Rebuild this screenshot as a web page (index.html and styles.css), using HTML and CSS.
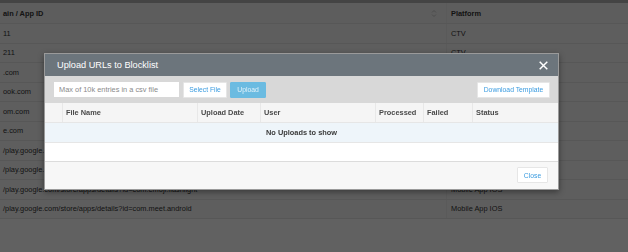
FILE: index.html
```html
<!DOCTYPE html>
<html lang="en">
<head>
  <meta charset="UTF-8">
  <meta name="viewport" content="width=device-width, initial-scale=1.0">
  <title>Blocklist</title>
  <link rel="stylesheet" href="styles.css">
</head>
<body>
  <div class="topbar"></div>
  <div class="list">
    <div class="list-row list-head">
      <div class="cell cell-main">
        <span>ain / App ID</span>
        <svg class="sort" width="6" height="9" viewBox="0 0 6 9">
          <path d="M1 3.5 L3 1.5 L5 3.5 M1 5.5 L3 7.5 L5 5.5" fill="none" stroke="#c8c8c8" stroke-width="1"/>
        </svg>
      </div>
      <div class="cell cell-platform">Platform</div>
    </div>
    <div class="list-row"><div class="cell cell-main">11</div><div class="cell cell-platform">CTV</div></div>
    <div class="list-row"><div class="cell cell-main">211</div><div class="cell cell-platform">CTV</div></div>
    <div class="list-row"><div class="cell cell-main">.com</div><div class="cell cell-platform">Web</div></div>
    <div class="list-row"><div class="cell cell-main">ook.com</div><div class="cell cell-platform">Web</div></div>
    <div class="list-row"><div class="cell cell-main">om.com</div><div class="cell cell-platform">Web</div></div>
    <div class="list-row"><div class="cell cell-main">e.com</div><div class="cell cell-platform">Web</div></div>
    <div class="list-row"><div class="cell cell-main">/play.google.com/store/apps/details?id=com.calc.android</div><div class="cell cell-platform">Mobile App IOS</div></div>
    <div class="list-row"><div class="cell cell-main">/play.google.com/store/apps/details?id=com.notes.app</div><div class="cell cell-platform">Mobile App IOS</div></div>
    <div class="list-row"><div class="cell cell-main">/play.google.com/store/apps/details?id=com.emoji.flashlight</div><div class="cell cell-platform">Mobile App IOS</div></div>
    <div class="list-row"><div class="cell cell-main">/play.google.com/store/apps/details?id=com.meet.android</div><div class="cell cell-platform">Mobile App IOS</div></div>
  </div>

  <div class="backdrop"></div>

  <div class="modal">
    <div class="modal-header">
      <span class="modal-title">Upload URLs to Blocklist</span>
      <svg class="modal-close" width="9" height="9" viewBox="0 0 9 9">
        <path d="M0.7 0.7 L8.3 8.3 M8.3 0.7 L0.7 8.3" stroke="#fff" stroke-width="1.5"/>
      </svg>
    </div>
    <div class="toolbar">
      <input class="file-input" type="text" placeholder="Max of 10k entries in a csv file">
      <button class="btn btn-select">Select File</button>
      <button class="btn btn-upload">Upload</button>
      <button class="btn btn-template">Download Template</button>
    </div>
    <div class="uploads">
      <div class="uploads-head">
        <div class="col"></div>
        <div class="col">File Name</div>
        <div class="col">Upload Date</div>
        <div class="col">User</div>
        <div class="col">Processed</div>
        <div class="col">Failed</div>
        <div class="col">Status</div>
      </div>
      <div class="uploads-empty">No Uploads to show</div>
      <div class="uploads-space"></div>
    </div>
    <div class="modal-footer">
      <button class="btn btn-close">Close</button>
    </div>
  </div>
</body>
</html>
```

FILE: styles.css
```css
body {
  margin: 0;
  background: #fff;
  font-family: "Liberation Sans", Arial, sans-serif;
  color: #333;
  width: 628px;
  height: 252px;
  overflow: hidden;
}

.topbar {
  height: 3px;
  background: #b4b4b4;
}

/* list behind the dialog */
.list {
  width: 628px;
}

.list-row {
  display: grid;
  grid-template-columns: 446px 1fr;
  height: 19.5px;
  box-sizing: border-box;
  border-bottom: 1px solid #e4e4e4;
  background: #f8f8f8;
  font-size: 7.4px;
}

.list-head {
  height: 21px;
  font-weight: bold;
  background: #f4f4f4;
}

.cell {
  display: flex;
  align-items: center;
  white-space: nowrap;
  overflow: hidden;
}

.cell-main {
  padding-left: 3px;
  justify-content: space-between;
  padding-right: 9px;
}

.cell-platform {
  padding-left: 4px;
  border-left: 1px solid #ececec;
}

.backdrop {
  position: fixed;
  inset: 0;
  background: rgba(0, 0, 0, 0.62);
}

/* dialog */
.modal {
  position: absolute;
  left: 44px;
  top: 53px;
  width: 515px;
  box-sizing: border-box;
  border: 1px solid #9a9a9a;
  background: #fff;
  box-shadow: 0 2px 6px rgba(0, 0, 0, 0.4);
}

.modal-header {
  height: 22px;
  background: #6c757c;
  display: flex;
  align-items: center;
  justify-content: space-between;
  padding: 0 10px 0 12px;
}

.modal-title {
  color: #fff;
  font-size: 9.2px;
}

.toolbar {
  height: 27px;
  background: #d8d8d8;
  display: flex;
  align-items: center;
  padding: 0 8px 0 9px;
}

.file-input {
  width: 125px;
  height: 15px;
  box-sizing: border-box;
  border: none;
  padding: 0 5px;
  font-family: inherit;
  font-size: 7.4px;
  color: #333;
}

.file-input::placeholder {
  color: #8a8a8a;
}

.btn {
  height: 16px;
  box-sizing: border-box;
  padding: 0;
  border: 1px solid #e6e6e6;
  border-radius: 1px;
  background: #fff;
  color: #3b9ce0;
  font-family: inherit;
  font-size: 6.8px;
}

.btn-select {
  margin-left: 4px;
  width: 44px;
}

.btn-upload {
  margin-left: 3px;
  width: 36px;
  background: #6bbbe1;
  border-color: #6bbbe1;
  color: #e2f2fa;
}

.btn-template {
  margin-left: auto;
  width: 73px;
}

.uploads-head {
  display: grid;
  grid-template-columns: 17px 135px 63px 115px 48px 49px 1fr;
  height: 20px;
  box-sizing: border-box;
  background: #f5f5f5;
  border-bottom: 1px solid #e6e6e6;
  font-size: 7.4px;
  font-weight: bold;
  color: #4a4a4a;
}

.col {
  display: flex;
  align-items: center;
  padding-left: 3px;
  border-left: 1px solid #e8e8e8;
}

.col:first-child {
  border-left: none;
}

.uploads-empty {
  height: 19.5px;
  box-sizing: border-box;
  background: #eef5fa;
  border-bottom: 1px solid #e6e6e6;
  display: flex;
  align-items: center;
  justify-content: center;
  font-size: 7.4px;
  font-weight: bold;
  color: #3a3a3a;
}

.uploads-space {
  height: 18px;
}

.modal-footer {
  height: 28px;
  box-sizing: border-box;
  border-top: 1px solid #dcdcdc;
  background: #f7f7f7;
  display: flex;
  align-items: center;
  justify-content: flex-end;
  padding-right: 10px;
}

.btn-close {
  width: 31px;
}
```
